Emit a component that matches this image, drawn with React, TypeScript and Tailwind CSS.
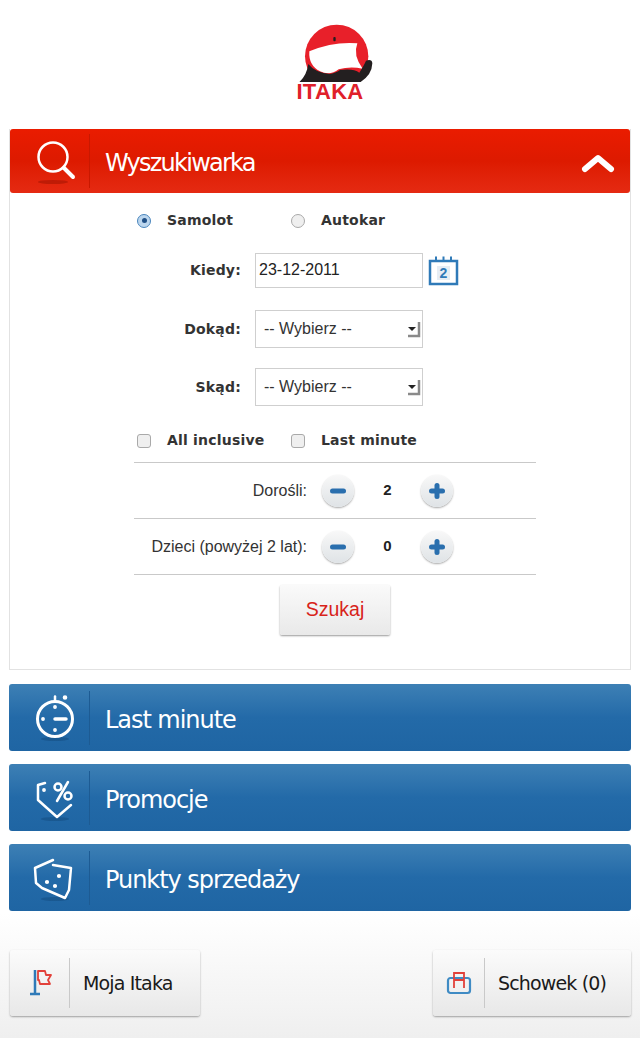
import React from 'react';

const Logo = () => (
  <div className="flex flex-col items-center h-[129px] pt-[22px]">
    <svg className="ml-[30px]" width="80" height="60" viewBox="165 60 240 180">
      <circle cx="290" cy="163" r="95" fill="#e8202a" />
      <path d="M208 148 Q280 118 352 124 Q338 160 368 200 Q330 192 296 202 Q270 222 240 208 Q205 190 208 148Z" fill="#fff" />
      <path d="M175 243 Q200 222 205 186 Q225 212 270 216 Q290 212 300 204 Q340 198 358 212 Q372 190 378 176 Q396 170 397 184 Q396 218 362 240 L352 243Z" fill="#231f20" />
      <rect x="280" y="105" width="7" height="13" rx="3" fill="#231f20" />
    </svg>
    <div className="ml-[20px] mt-[0px] font-['Liberation_Sans',sans-serif] font-bold text-[22px] leading-[20px] tracking-[0.3px] text-[#e0202a]">ITAKA</div>
  </div>
);

const BarIcon = ({ children }: { children: React.ReactNode }) => (
  <svg width="46" height="46" viewBox="0 0 46 46" fill="none" stroke="#fff" strokeWidth="2.2" strokeLinecap="round" strokeLinejoin="round">
    <ellipse cx="23" cy="44" rx="14" ry="2" fill="#0f3f6e" fillOpacity="0.35" stroke="none" />
    {children}
  </svg>
);

const BlueBar = ({ label, icon }: { label: string; icon: React.ReactNode }) => (
  <div className="flex h-[67px] items-center rounded-[3px] bg-gradient-to-b from-[#3d80b5] via-[#236aa8] to-[#1f65a3]">
    <div className="flex h-[54px] w-[81px] items-center justify-center border-r border-[#1d5b93] pl-[11px]">{icon}</div>
    <span className="pl-[15px] pt-[4px] font-['DejaVu_Sans',sans-serif] text-[24px] tracking-[-1.05px] text-white">{label}</span>
  </div>
);

const Radio = ({ on }: { on?: boolean }) => (
  <span className={`flex h-[14px] w-[14px] items-center justify-center rounded-full border ${on ? 'border-[#4a86bd] bg-[#bcd6ee]' : 'border-[#a9a9a9] bg-[#efefef]'}`}>
    {on && <span className="h-[5px] w-[5px] rounded-full bg-[#1f4f86]" />}
  </span>
);

const Checkbox = () => <span className="h-[14px] w-[14px] rounded-[3px] border border-[#a9a9a9] bg-[#efefef]" />;

const Field = ({ label, children, className }: { label: string; children: React.ReactNode; className: string }) => (
  <div className={`flex items-center ${className}`}>
    <span className="w-[107px] text-right font-['DejaVu_Sans',sans-serif] text-[14px] font-bold tracking-[0.2px] text-[#333]">{label}</span>
    <div className="ml-[14px] flex items-center">{children}</div>
  </div>
);

const SelectBox = () => (
  <div className="flex h-[38px] w-[168px] items-center justify-between border border-[#cfcfcf] bg-white pl-[8px] pr-[1px] font-['Liberation_Sans',sans-serif] text-[16px] text-[#333]">
    -- Wybierz --
    <svg width="14" height="28" viewBox="0 0 14 28">
      <path d="M1 12h8l-4 4z" fill="#222" />
      <path d="M1 21h11V7" fill="none" stroke="#8a8a8a" strokeWidth="2.500" />
    </svg>
  </div>
);

const RoundButton = ({ plus }: { plus?: boolean }) => (
  <button className="flex h-[32px] w-[32px] items-center justify-center rounded-full bg-gradient-to-b from-[#f8f8f8] to-[#dfe3e6] shadow-[0_1px_2px_rgba(0,0,0,0.35)]">
    <svg width="18" height="18" viewBox="0 0 18 18" stroke="#2a6fae" strokeWidth="5" strokeLinecap="round">
      <path d="M3.500 9h11" />
      {plus && <path d="M9 3.500v11" />}
    </svg>
  </button>
);

const Stepper = ({ label, value }: { label: string; value: string }) => (
  <div className="flex h-[56px] items-center border-b border-[#c9c9c9]">
    <span className="w-[173px] text-right font-['Liberation_Sans',sans-serif] text-[16px] text-[#333]">{label}</span>
    <div className="ml-[15px]"><RoundButton /></div>
    <span className="w-[67px] text-center font-['Liberation_Sans',sans-serif] text-[15px] font-bold text-[#222]">{value}</span>
    <RoundButton plus />
  </div>
);

const FooterButton = ({ label, icon, iconWidth, className }: { label: string; icon: React.ReactNode; iconWidth: string; className: string }) => (
  <button className={`flex h-[66px] items-center rounded-[3px] bg-gradient-to-b from-[#fbfbfb] to-[#e8e8e8] shadow-[0_1px_2px_rgba(0,0,0,0.35)] ${className}`}>
    <span className={`flex h-[50px] items-center justify-center border-r border-[#c9c9c9] ${iconWidth}`}>{icon}</span>
    <span className="pl-[13px] font-['DejaVu_Sans',sans-serif] text-[19px] tracking-[-0.85px] text-[#1a1a1a]">{label}</span>
  </button>
);

export default function App() {
  return (
    <div className="h-[1038px] w-[640px] overflow-hidden bg-gradient-to-b from-white from-[88%] to-[#efefef]">
      <Logo />

      {/* Search panel */}
      <div className="mx-[9px] h-[541px] border-x border-b border-[#e2e2e2] bg-white">
        <div className="flex h-[64px] items-center rounded-[3px] bg-gradient-to-b from-[#ea1c00] via-[#dd1a00] to-[#e52a12]">
          <div className="flex h-[54px] w-[80px] items-center justify-center border-r border-[#c91800] pl-[10px]">
            <svg width="46" height="46" viewBox="0 0 46 46" fill="none" stroke="#fff" strokeLinecap="round">
              <ellipse cx="21" cy="44" rx="15" ry="2" fill="#9c1200" fillOpacity="0.5" stroke="none" />
              <circle cx="21" cy="19" r="14.500" strokeWidth="2.500" />
              <path d="M32 30l9 9" strokeWidth="4" />
            </svg>
          </div>
          <span className="pl-[15px] pt-[3px] font-['DejaVu_Sans',sans-serif] text-[24px] tracking-[-1.75px] text-white">Wyszukiwarka</span>
          <svg className="ml-auto mr-[15px] mt-[4px]" width="34" height="22" viewBox="0 0 34 22" fill="none" stroke="#fff" strokeWidth="6" strokeLinecap="round" strokeLinejoin="round">
            <path d="M4 17L17 6l13 11" />
          </svg>
        </div>

        <div className="ml-[124px] w-[402px]">
          <div className="flex h-[56px] items-center pb-[1px] pl-[3px] font-['DejaVu_Sans',sans-serif] text-[14px] font-bold tracking-[0.2px] text-[#333]">
            <span className="flex w-[154px] items-center gap-[16px]"><Radio on />Samolot</span>
            <span className="flex items-center gap-[16px]"><Radio />Autokar</span>
          </div>

          <Field label="Kiedy:" className="h-[42px]">
            <input readOnly value="23-12-2011" className="h-[35px] w-[168px] border border-[#cfcfcf] bg-white pl-[3px] font-['Liberation_Sans',sans-serif] text-[16px] text-[#222]" />
            <svg className="ml-[5px]" width="31" height="31" viewBox="0 0 31 31" fill="none" stroke="#2f7ab8">
              <rect x="2" y="6" width="27" height="23" strokeWidth="2.500" />
              <path d="M8 1.500v5M15.500 1.500v5M23 1.500v5" strokeWidth="2" />
              <rect x="9" y="11" width="13" height="14" fill="#e6edf4" stroke="none" />
              <text x="15.500" y="23" textAnchor="middle" fontFamily="Liberation Sans" fontWeight="700" fontSize="14" fill="#2f7ab8" stroke="none">2</text>
            </svg>
          </Field>

          <Field label="Dokąd:" className="mt-[19px] h-[38px]"><SelectBox /></Field>
          <Field label="Skąd:" className="mt-[20px] h-[38px]"><SelectBox /></Field>

          <div className="mt-[15px] flex h-[39px] items-center border-b-0 pl-[3px] font-['DejaVu_Sans',sans-serif] text-[14px] font-bold tracking-[0.2px] text-[#333]">
            <span className="flex w-[154px] items-center gap-[16px]"><Checkbox />All inclusive</span>
            <span className="flex items-center gap-[16px]"><Checkbox />Last minute</span>
          </div>

          <div className="mt-[2px] border-t border-[#c9c9c9]">
            <Stepper label="Dorośli:" value="2" />
            <Stepper label="Dzieci (powyżej 2 lat):" value="0" />
          </div>

          <div className="mt-[10px] flex justify-center">
            <button className="h-[50px] w-[110px] rounded-[2px] bg-gradient-to-b from-[#fafafa] to-[#e9e9e9] font-['Liberation_Sans',sans-serif] text-[19.500px] text-[#d8231a] shadow-[0_1px_2px_rgba(0,0,0,0.4)]">Szukaj</button>
          </div>
        </div>
      </div>

      {/* Sections */}
      <div className="mx-[9px] mt-[14px] flex flex-col gap-[13px]">
        <BlueBar
          label="Last minute"
          icon={
            <BarIcon>
              <circle cx="23" cy="24" r="17.500" strokeWidth="3" />
              <path d="M23 24h11" strokeWidth="3.500" />
              <path d="M23 1.500v4" strokeWidth="2.500" />
              <circle cx="33" cy="2.500" r="1.200" fill="#fff" />
              <circle cx="23" cy="12" r="0.800" fill="#fff" />
              <circle cx="23" cy="35" r="0.800" fill="#fff" />
              <circle cx="11" cy="24" r="0.800" fill="#fff" />
            </BarIcon>
          }
        />
        <BlueBar
          label="Promocje"
          icon={
            <BarIcon>
              <path d="M13 8l-7 2v15l19 17 14-12" strokeWidth="2.500" />
              <circle cx="12" cy="15" r="0.800" fill="#fff" />
              <circle cx="26" cy="12" r="3.500" strokeWidth="2.500" />
              <circle cx="36" cy="21" r="3.500" strokeWidth="2.500" />
              <path d="M36 7L25 26" strokeWidth="2.500" />
            </BarIcon>
          }
        />
        <BlueBar
          label="Punkty sprzedaży"
          icon={
            <BarIcon>
              <path d="M21 5L3 13l1 15 6 5 23 10 4-8 2-22-18-3" strokeWidth="2.500" />
              <circle cx="15" cy="27" r="1" fill="#fff" />
              <circle cx="27" cy="21" r="1" fill="#fff" />
              <circle cx="23" cy="31" r="1" fill="#fff" />
            </BarIcon>
          }
        />
      </div>

      {/* Footer */}
      <div className="ml-[10px] mr-[9px] mt-[39px] flex justify-between">
        <FooterButton
          label="Moja Itaka"
          className="w-[190px]"
          iconWidth="w-[60px]"
          icon={
            <svg width="28" height="32" viewBox="0 0 28 32" fill="none">
              <path d="M9 3v24M4 27h10" stroke="#2f7ab8" strokeWidth="2.500" />
              <path d="M12 4h7l1 4h5l-3 5 2 4H14l-1-4h-1z" stroke="#e2413a" strokeWidth="1.800" strokeLinejoin="round" />
            </svg>
          }
        />
        <FooterButton
          label="Schowek (0)"
          className="w-[198px]"
          iconWidth="w-[52px]"
          icon={
            <svg width="26" height="28" viewBox="0 0 26 28" fill="none">
              <rect x="2" y="9" width="22" height="15" rx="2.500" stroke="#3f8bc4" strokeWidth="2.200" />
              <path d="M8 19V4h10v15M8 11h10" stroke="#e2413a" strokeWidth="1.800" />
            </svg>
          }
        />
      </div>
    </div>
  );
}
